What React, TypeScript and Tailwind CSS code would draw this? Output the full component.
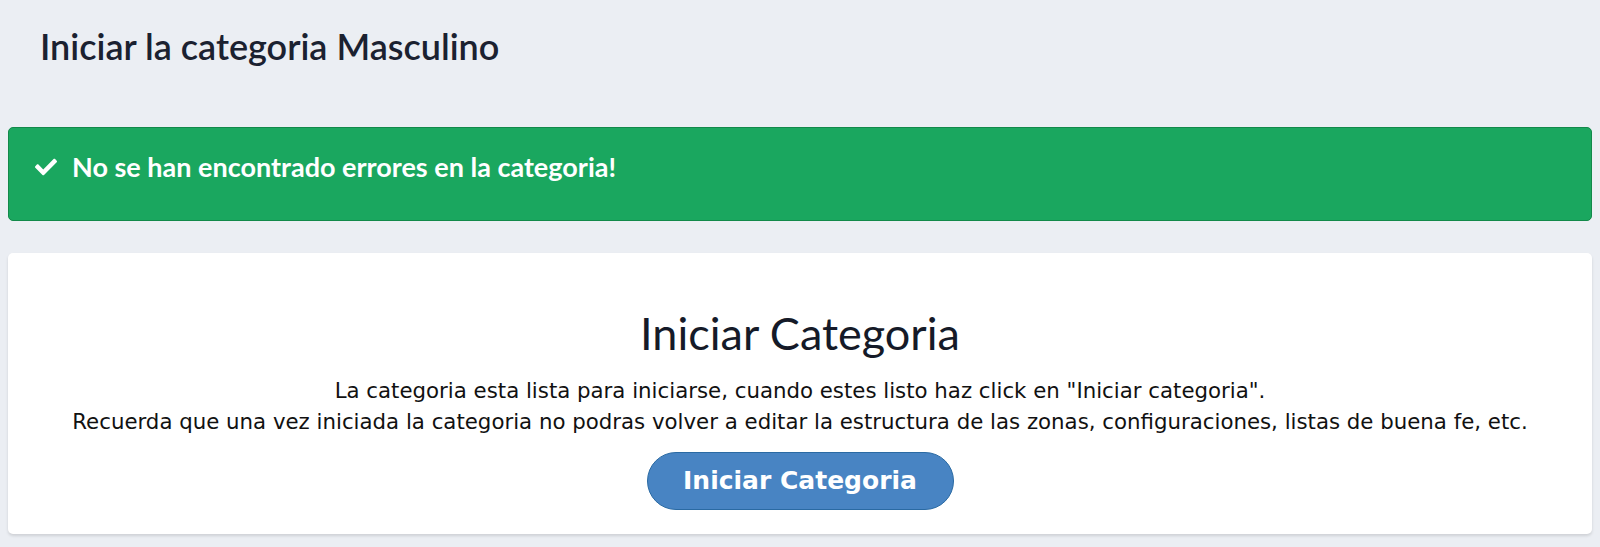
import React from "react";

function Check() {
  return (
    <svg viewBox="0 0 512 512" className="w-[22px] h-[22px]" fill="white">
      <path d="M173.898 439.404l-166.4-166.4c-9.997-9.997-9.997-26.206 0-36.204l36.203-36.204c9.997-9.998 26.207-9.998 36.204 0L192 312.69 432.095 72.596c9.997-9.997 26.207-9.997 36.204 0l36.203 36.204c9.997 9.997 9.997 26.206 0 36.204l-294.4 294.401c-9.998 9.997-26.207 9.997-36.204-.001z" />
    </svg>
  );
}

export default function App() {
  const head = { fontFamily: "Lato, 'Noto Sans', sans-serif" };
  const body = { fontFamily: "'DejaVu Sans', 'Open Sans', sans-serif" };
  return (
    <div className="min-h-[547px] bg-[#ebeef3] px-[8px] pt-[26px] pb-[13px]">
      <h2 style={head} className="pl-[32px] text-[36px] font-semibold text-[#1b2130] leading-[40px] h-[101px]">
        Iniciar la categoria Masculino
      </h2>
      <div className="h-[94px] rounded-[5px] border border-[#12894a] bg-[#1aa75f] pl-[26px] pt-[21px]">
        <div className="flex items-center gap-[15px]">
          <Check />
          <span style={head} className="text-[27px] font-bold text-white leading-[36px]">
            No se han encontrado errores en la categoria!
          </span>
        </div>
      </div>
      <div className="mt-[32px] h-[281px] rounded-[5px] bg-white shadow-[0_2px_3px_rgba(0,0,0,0.12)] flex flex-col items-center pt-[52px]">
        <h1 style={head} className="text-[45px] font-normal text-[#151a28] leading-[56px]">
          Iniciar Categoria
        </h1>
        <p style={body} className="mt-[14px] text-[21.3px] text-[#111] leading-[31px] text-center">
          La categoria esta lista para iniciarse, cuando estes listo haz click en "Iniciar categoria".
          <br />
          Recuerda que una vez iniciada la categoria no podras volver a editar la estructura de las zonas, configuraciones, listas de buena fe, etc.
        </p>
        <button
          style={body}
          className="mt-[15px] h-[58px] w-[307px] rounded-full border border-[#2a6aa3] bg-[#4884c3] text-white text-[25px] font-bold"
        >
          Iniciar Categoria
        </button>
      </div>
    </div>
  );
}
